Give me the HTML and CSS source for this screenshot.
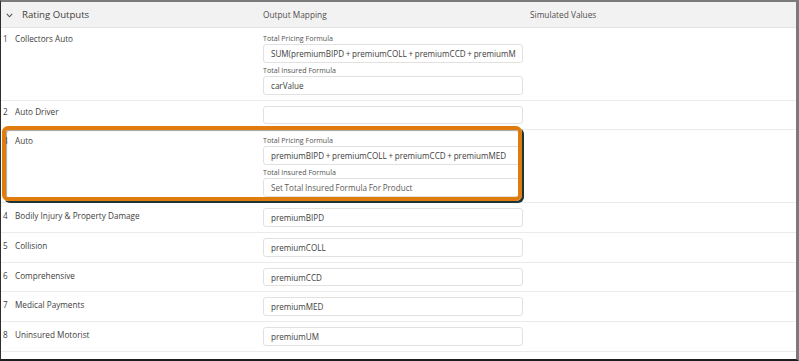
FILE: index.html
```html
<!DOCTYPE html>
<html>
<head>
<meta charset="utf-8">
<link rel="stylesheet" href="styles.css">
</head>
<body>
<div class="frame">
  <div class="head">
    <div class="c-name head-title">
      <svg class="chev" width="7" height="5" viewBox="0 0 7 5"><path d="M0.8 0.8 L3.5 3.8 L6.2 0.8" fill="none" stroke="#55534f" stroke-width="1.1"/></svg>
      <span>Rating Outputs</span>
    </div>
    <div class="c-map head-col">Output Mapping</div>
    <div class="c-sim head-col">Simulated Values</div>
  </div>

  <div class="row">
    <div class="c-name"><span class="num">1</span>Collectors Auto</div>
    <div class="c-map">
      <div class="lbl">Total Pricing Formula</div>
      <div class="inp">SUM(premiumBIPD + premiumCOLL + premiumCCD + premiumM</div>
      <div class="lbl second">Total Insured Formula</div>
      <div class="inp">carValue</div>
    </div>
    <div class="c-sim"></div>
  </div>

  <div class="row">
    <div class="c-name"><span class="num">2</span>Auto Driver</div>
    <div class="c-map"><div class="inp"></div></div>
    <div class="c-sim"></div>
  </div>

  <div class="row">
    <div class="c-name"><span class="num">3</span>Auto</div>
    <div class="c-map">
      <div class="lbl">Total Pricing Formula</div>
      <div class="inp">premiumBIPD + premiumCOLL + premiumCCD + premiumMED</div>
      <div class="lbl second">Total Insured Formula</div>
      <div class="inp ph">Set Total Insured Formula For Product</div>
    </div>
    <div class="c-sim"></div>
    <div class="highlight"></div>
  </div>

  <div class="row simple">
    <div class="c-name"><span class="num">4</span>Bodily Injury &amp; Property Damage</div>
    <div class="c-map"><div class="inp">premiumBIPD</div></div>
    <div class="c-sim"></div>
  </div>
  <div class="row simple">
    <div class="c-name"><span class="num">5</span>Collision</div>
    <div class="c-map"><div class="inp">premiumCOLL</div></div>
    <div class="c-sim"></div>
  </div>
  <div class="row simple">
    <div class="c-name"><span class="num">6</span>Comprehensive</div>
    <div class="c-map"><div class="inp">premiumCCD</div></div>
    <div class="c-sim"></div>
  </div>
  <div class="row simple">
    <div class="c-name"><span class="num">7</span>Medical Payments</div>
    <div class="c-map"><div class="inp">premiumMED</div></div>
    <div class="c-sim"></div>
  </div>
  <div class="row simple">
    <div class="c-name"><span class="num">8</span>Uninsured Motorist</div>
    <div class="c-map"><div class="inp">premiumUM</div></div>
    <div class="c-sim"></div>
  </div>
</div>
</body>
</html>
```

FILE: styles.css
```css
* { box-sizing: border-box; }
html, body { margin: 0; padding: 0; background: #fff; }
body {
  font-family: "Open Sans", "Liberation Sans", sans-serif;
  color: #3e3e3c;
}
.frame {
  width: 799px;
  height: 361px;
  overflow: hidden;
  border-top: 2px solid #7b7b7b;
  border-right: 3px solid #7a7a7a;
  border-left: 1px solid #2e2e2e;
  border-bottom: 2px solid #1e1e1e;
  background: #fff;
}
.head {
  display: flex;
  align-items: center;
  height: 26px;
  background: #f3f2f2;
  border-bottom: 1px solid #e6e4e3;
}
.c-name { width: 262px; padding-left: 2px; flex: none; }
.c-map { width: 267px; flex: none; }
.c-sim { flex: 1; }
.head-title {
  display: flex;
  align-items: center;
  font-size: 9.6px;
  color: #3e3e3c;
}
.chev { margin: 1px 9px 0 3px; }
.head-col { font-size: 8.3px; color: #514f4d; }
.row {
  display: flex;
  padding: 5px 0 5px;
  border-bottom: 1px solid #ecebea;
  position: relative;
}
.row .c-name {
  font-size: 8.2px;
  line-height: 11px;
  color: #3e3e3c;
}
.row.simple .c-name { padding-top: 2px; }
.num { display: inline-block; width: 12px; }
.lbl {
  font-size: 7.1px;
  line-height: 11px;
  color: #54524f;
}
.lbl.second { margin-top: 2px; }
.inp {
  width: 260px;
  height: 18.8px;
  border: 1px solid #e3e1e0;
  border-radius: 3px;
  padding: 0 7px;
  font-size: 8.1px;
  word-spacing: -0.4px;
  line-height: 17px;
  color: #3e3e3c;
  white-space: nowrap;
  overflow: hidden;
  background: #fff;
}
.inp.ph { color: #5c5a57; }
.highlight {
  position: absolute;
  left: 1px;
  top: -4px;
  width: 520px;
  height: 75px;
  border: 4px solid #e07c0e;
  border-radius: 6px;
  box-shadow: 2px 2px 0 #1d3634, inset 1px 1px 1px rgba(0,0,0,0.35);
  pointer-events: none;
}
```
